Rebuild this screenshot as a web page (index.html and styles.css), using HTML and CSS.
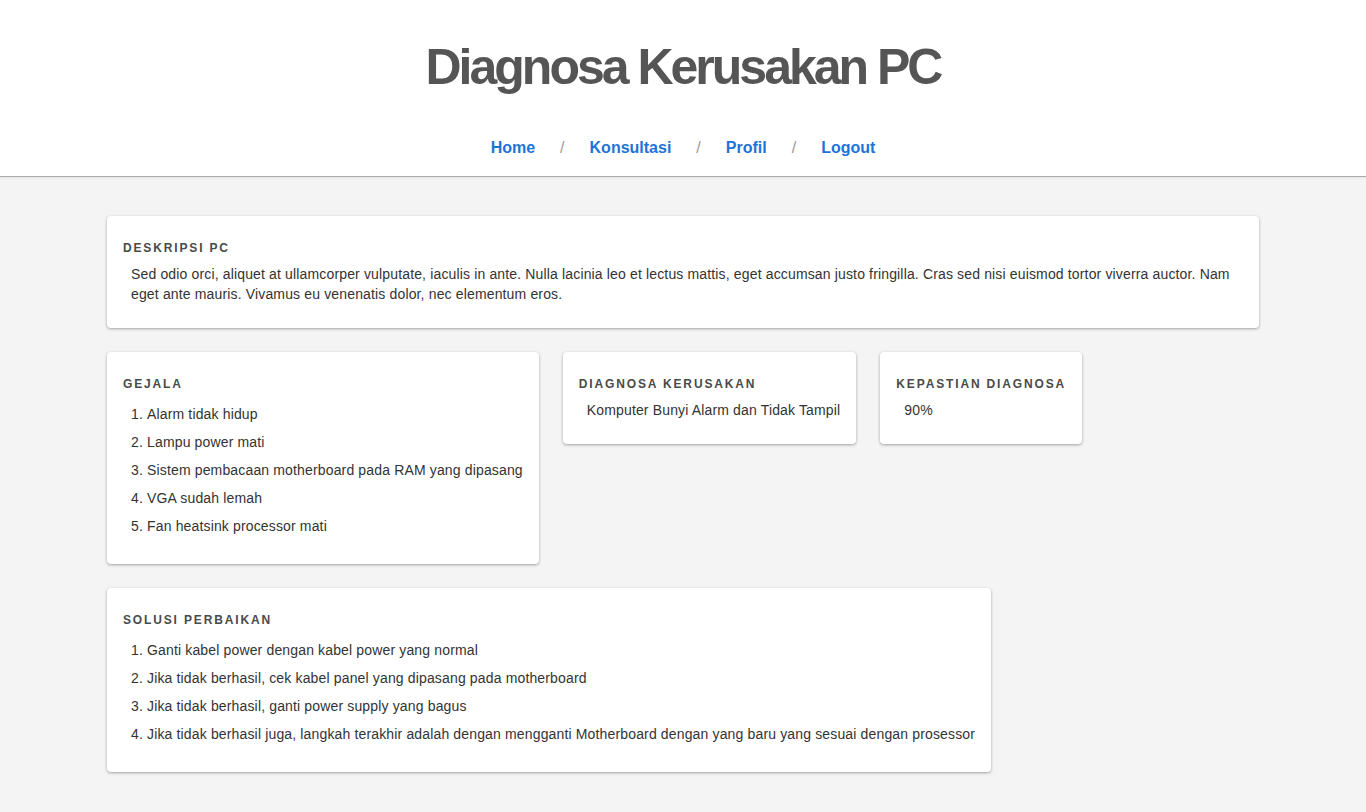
FILE: index.html
```html
<!DOCTYPE html>
<html lang="id">
<head>
<meta charset="utf-8">
<title>Diagnosa Kerusakan PC</title>
<link rel="stylesheet" href="styles.css">
</head>
<body>
<header class="header">
  <h1 class="title">Diagnosa Kerusakan PC</h1>
  <nav class="nav">
    <a href="#" class="nav-link">Home</a>
    <span class="sep">/</span>
    <a href="#" class="nav-link">Konsultasi</a>
    <span class="sep">/</span>
    <a href="#" class="nav-link">Profil</a>
    <span class="sep">/</span>
    <a href="#" class="nav-link">Logout</a>
  </nav>
</header>
<main class="main">
  <div class="row">
    <section class="card card-full">
      <h2 class="card-title">Deskripsi PC</h2>
      <p class="card-text">Sed odio orci, aliquet at ullamcorper vulputate, iaculis in ante. Nulla lacinia leo et lectus mattis, eget accumsan justo fringilla. Cras sed nisi euismod tortor viverra auctor. Nam eget ante mauris. Vivamus eu venenatis dolor, nec elementum eros.</p>
    </section>
  </div>
  <div class="row">
    <section class="card">
      <h2 class="card-title">Gejala</h2>
      <ol class="card-list">
        <li>Alarm tidak hidup</li>
        <li>Lampu power mati</li>
        <li>Sistem pembacaan motherboard pada RAM yang dipasang</li>
        <li>VGA sudah lemah</li>
        <li>Fan heatsink processor mati</li>
      </ol>
    </section>
    <section class="card">
      <h2 class="card-title">Diagnosa Kerusakan</h2>
      <p class="card-text">Komputer Bunyi Alarm dan Tidak Tampil</p>
    </section>
    <section class="card">
      <h2 class="card-title">Kepastian Diagnosa</h2>
      <p class="card-text">90%</p>
    </section>
  </div>
  <div class="row">
    <section class="card">
      <h2 class="card-title">Solusi Perbaikan</h2>
      <ol class="card-list">
        <li>Ganti kabel power dengan kabel power yang normal</li>
        <li>Jika tidak berhasil, cek kabel panel yang dipasang pada motherboard</li>
        <li>Jika tidak berhasil, ganti power supply yang bagus</li>
        <li>Jika tidak berhasil juga, langkah terakhir adalah dengan mengganti Motherboard dengan yang baru yang sesuai dengan prosessor</li>
      </ol>
    </section>
  </div>
</main>
</body>
</html>
```

FILE: styles.css
```css
* { box-sizing: border-box; }
html, body {
  margin: 0;
  padding: 0;
}
body {
  background: #f4f4f4;
  font-family: "Liberation Sans", Arial, sans-serif;
  color: #333;
  min-height: 812px;
}
.header {
  background: #fff;
  text-align: center;
  padding-top: 36px;
  height: 177px;
  border-bottom: 1px solid #aaa;
  box-shadow: 0 1px 2px rgba(0,0,0,0.08);
}
.title {
  margin: 0;
  font-size: 50px;
  line-height: 62px;
  font-weight: bold;
  letter-spacing: -3px;
  color: #555;
}
.nav {
  margin-top: 40px;
  display: flex;
  justify-content: center;
  align-items: center;
  gap: 25px;
  font-size: 16px;
  line-height: 20px;
}
.nav-link {
  color: #1e73d8;
  font-weight: bold;
  text-decoration: none;
}
.sep {
  color: #999;
  font-weight: normal;
}
.main {
  width: 1152px;
  margin: 39px auto 0;
  display: flex;
  flex-direction: column;
  gap: 24px;
}
.row {
  display: flex;
  gap: 24px;
  align-items: flex-start;
}
.card {
  background: #fff;
  border-radius: 4px;
  padding: 24px 16px;
  box-shadow: 0 1px 3px rgba(0,0,0,0.35);
}
.card-full { flex: 1; }
.card-title {
  margin: 0;
  font-size: 12px;
  line-height: 16px;
  font-weight: bold;
  letter-spacing: 1.85px;
  text-transform: uppercase;
  color: #4a4a4a;
}
.card-text {
  margin: 8px 0 0;
  padding-left: 8px;
  font-size: 14px;
  line-height: 20px;
  letter-spacing: 0.15px;
  color: #333;
}
.card-list {
  margin: 8px 0 0;
  padding-left: 8px;
  list-style-position: inside;
  font-size: 14px;
  line-height: 20px;
  letter-spacing: 0.15px;
  color: #333;
}
.card-list li {
  padding: 4px 0;
}
```
